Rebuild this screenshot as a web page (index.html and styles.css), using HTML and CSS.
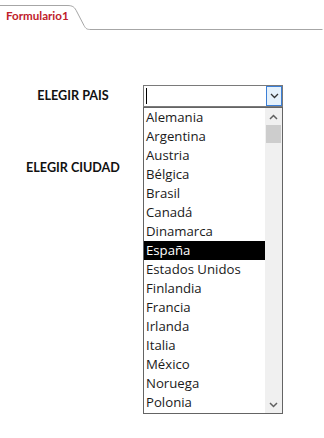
FILE: index.html
```html
<!DOCTYPE html>
<html>
<head>
<meta charset="utf-8">
<link rel="stylesheet" href="styles.css">
</head>
<body>
<div class="tabbar">
  <svg class="tabshape" width="324" height="31" viewBox="0 0 324 31">
    <path d="M0 5.5 H67 C73 5.5 74.5 7 77 12 L84 25.5 C86 29 87 29.5 91 29.5 H322.5" fill="#fff" stroke="#a6a6a6" stroke-width="1"/>
  </svg>
  <span class="tablabel">Formulario1</span>
</div>
<div class="form">
  <div class="row row-pais">
    <div class="label">ELEGIR PAIS</div>
    <div class="combo">
      <div class="combo-field"><span class="caret"></span></div>
      <div class="combo-btn">
        <svg width="9" height="6" viewBox="0 0 9 6"><path d="M1 1 L4.5 4.5 L8 1" fill="none" stroke="#333" stroke-width="1.3"/></svg>
      </div>
      <div class="dropdown">
        <ul class="items">
          <li>Alemania</li>
          <li>Argentina</li>
          <li>Austria</li>
          <li>Bélgica</li>
          <li>Brasil</li>
          <li>Canadá</li>
          <li>Dinamarca</li>
          <li class="sel">España</li>
          <li>Estados Unidos</li>
          <li>Finlandia</li>
          <li>Francia</li>
          <li>Irlanda</li>
          <li>Italia</li>
          <li>México</li>
          <li>Noruega</li>
          <li>Polonia</li>
        </ul>
        <div class="scroll">
          <div class="sbtn"><svg width="9" height="6" viewBox="0 0 9 6"><path d="M1 5 L4.5 1.5 L8 5" fill="none" stroke="#606060" stroke-width="1.5"/></svg></div>
          <div class="thumb"></div>
          <div class="track"></div>
          <div class="sbtn"><svg width="9" height="6" viewBox="0 0 9 6"><path d="M1 1 L4.5 4.5 L8 1" fill="none" stroke="#606060" stroke-width="1.5"/></svg></div>
        </div>
      </div>
    </div>
  </div>
  <div class="row row-ciudad">
    <div class="label">ELEGIR CIUDAD</div>
  </div>
</div>
</body>
</html>
```
FILE: styles.css
```css
html, body {
  margin: 0;
  padding: 0;
  background: #fff;
}
body {
  width: 324px;
  height: 438px;
  overflow: hidden;
  font-family: Lato, "Open Sans", sans-serif;
}
.tabbar {
  position: relative;
  height: 31px;
}
.tabshape {
  display: block;
}
.tablabel {
  position: absolute;
  left: 6px;
  top: 9px;
  font-size: 11.6px;
  font-weight: bold;
  color: #c0202a;
  line-height: 14px;
}
.form {
  padding-top: 54px;
}
.row {
  display: flex;
  align-items: flex-start;
}
.label {
  width: 140px;
  padding-left: 3px;
  text-align: center;
  font-weight: bold;
  font-size: 12.6px;
  color: #111;
  line-height: 22px;
}
.row-pais {
  height: 72px;
}
.combo {
  position: relative;
  width: 140px;
  height: 22px;
  box-sizing: border-box;
  border: 1px solid #7a7a7a;
  display: flex;
  background: #fff;
}
.combo-field {
  flex: 1;
  position: relative;
}
.caret {
  position: absolute;
  left: 2px;
  top: 2px;
  width: 1px;
  height: 16px;
  background: #000;
}
.combo-btn {
  width: 16px;
  box-sizing: border-box;
  border: 1px solid #3c7fd6;
  background: #e5f1fb;
  display: flex;
  align-items: center;
  justify-content: center;
}
.dropdown {
  position: absolute;
  left: -1px;
  top: 21px;
  width: 140px;
  height: 307px;
  box-sizing: border-box;
  border: 1px solid #646464;
  background: #fff;
  display: flex;
}
.items {
  list-style: none;
  margin: 0;
  padding: 0;
  flex: 1;
}
.items li {
  height: 19px;
  line-height: 19px;
  padding-left: 2px;
  font-family: "Open Sans", sans-serif;
  font-size: 13.2px;
  color: #1a1a1a;
  white-space: nowrap;
}
.items li.sel {
  background: #000;
  color: #fff;
}
.scroll {
  width: 17px;
  background: #f0f0f0;
  display: flex;
  flex-direction: column;
}
.sbtn {
  height: 17px;
  display: flex;
  align-items: center;
  justify-content: center;
}
.thumb {
  height: 18px;
  margin: 0 1px;
  background: #cdcdcd;
}
.track {
  flex: 1;
}
```
